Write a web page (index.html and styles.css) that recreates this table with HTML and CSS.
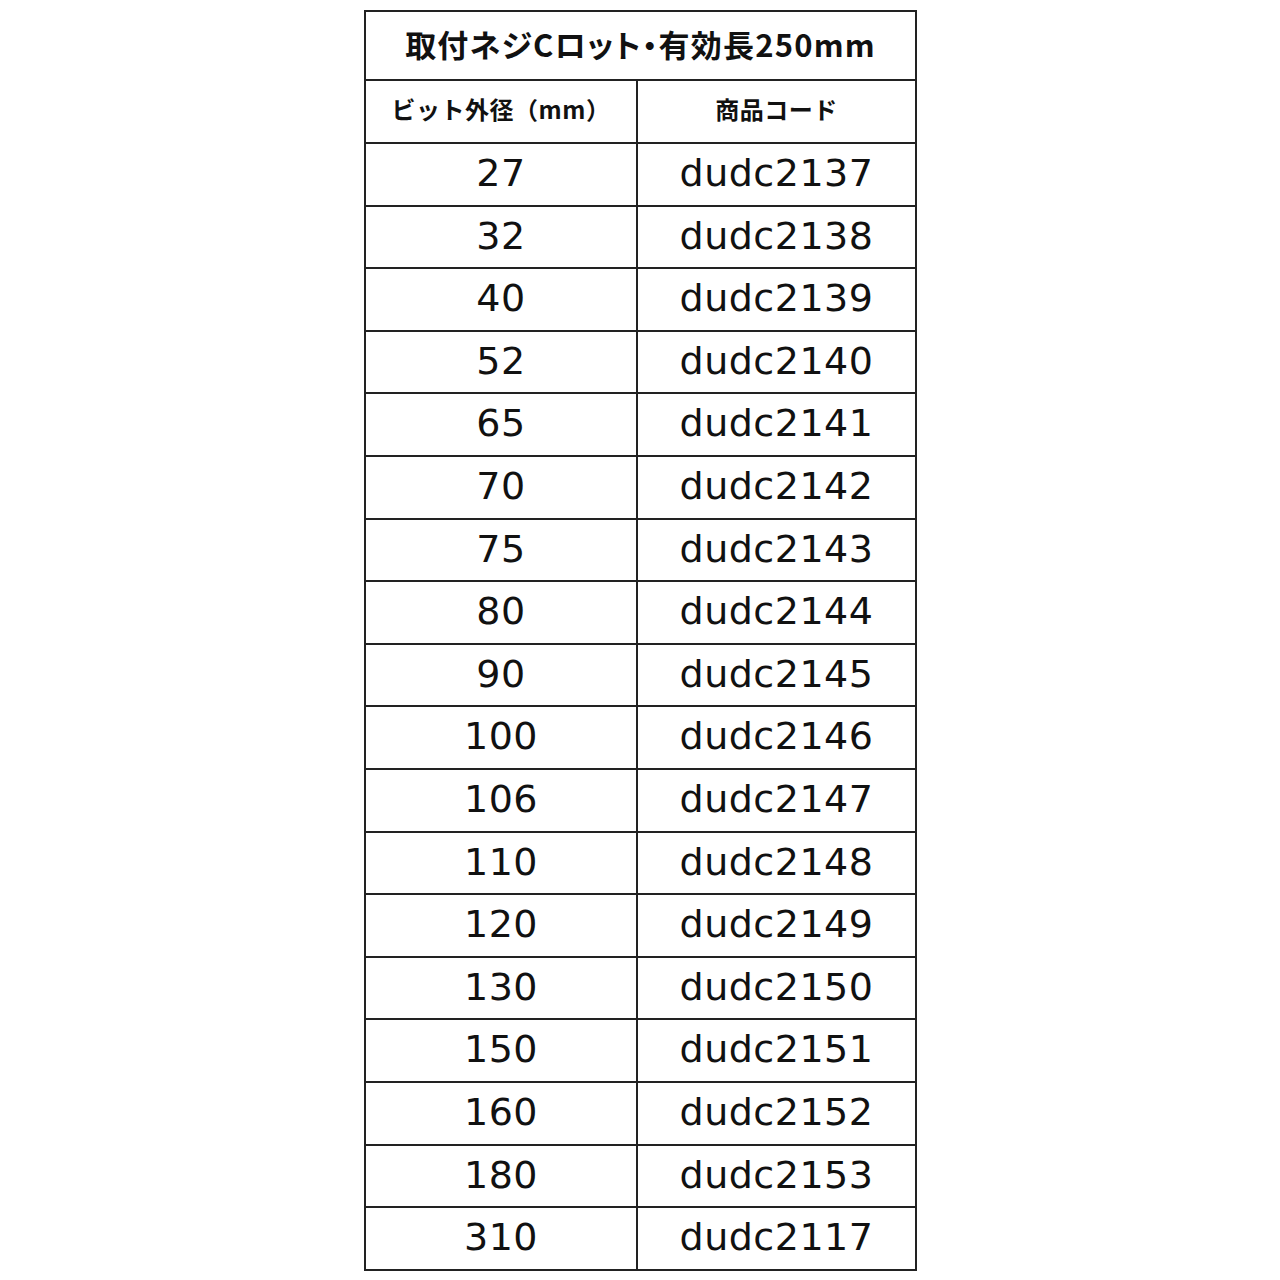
FILE: index.html
```html
<!DOCTYPE html>
<html lang="ja">
<head>
<meta charset="utf-8">
<link rel="stylesheet" href="styles.css">
</head>
<body>
<table class="spec">
  <colgroup>
    <col class="col-size">
    <col class="col-code">
  </colgroup>
  <thead>
    <tr><th class="title" colspan="2">取付ネジCロット・有効長250mm</th></tr>
    <tr><th class="head">ビット外径（mm）</th><th class="head">商品コード</th></tr>
  </thead>
  <tbody>
    <tr><td>27</td><td>dudc2137</td></tr>
    <tr><td>32</td><td>dudc2138</td></tr>
    <tr><td>40</td><td>dudc2139</td></tr>
    <tr><td>52</td><td>dudc2140</td></tr>
    <tr><td>65</td><td>dudc2141</td></tr>
    <tr><td>70</td><td>dudc2142</td></tr>
    <tr><td>75</td><td>dudc2143</td></tr>
    <tr><td>80</td><td>dudc2144</td></tr>
    <tr><td>90</td><td>dudc2145</td></tr>
    <tr><td>100</td><td>dudc2146</td></tr>
    <tr><td>106</td><td>dudc2147</td></tr>
    <tr><td>110</td><td>dudc2148</td></tr>
    <tr><td>120</td><td>dudc2149</td></tr>
    <tr><td>130</td><td>dudc2150</td></tr>
    <tr><td>150</td><td>dudc2151</td></tr>
    <tr><td>160</td><td>dudc2152</td></tr>
    <tr><td>180</td><td>dudc2153</td></tr>
    <tr><td>310</td><td>dudc2117</td></tr>
  </tbody>
</table>
</body>
</html>
```
FILE: styles.css
```css
html, body {
  margin: 0;
  padding: 0;
  background: #ffffff;
}
body {
  padding-top: 10px;
  font-family: "Noto Sans CJK JP", "Noto Sans", sans-serif;
  color: #111111;
}
.spec {
  margin-left: 364px;
  width: 551px;
  border-collapse: collapse;
  table-layout: fixed;
}
.col-size {
  width: 272px;
}
.col-code {
  width: 279px;
}
.spec th, .spec td {
  border: 2px solid #222222;
  text-align: center;
  padding: 0;
  line-height: 1.2;
}
.spec .title {
  height: 63px;
  padding-bottom: 4px;
  font-size: 31px;
  font-weight: 700;
  font-feature-settings: "palt";
  letter-spacing: 1.2px;
}
.spec .head {
  height: 57px;
  padding-bottom: 4px;
  font-size: 24px;
  font-weight: 700;
  letter-spacing: 0.5px;
}
.spec td {
  height: 59.6px;
  padding-bottom: 1px;
  font-family: "DejaVu Sans", "Noto Sans CJK JP", sans-serif;
  font-size: 38px;
  font-weight: 400;
  letter-spacing: 0.5px;
}
```
